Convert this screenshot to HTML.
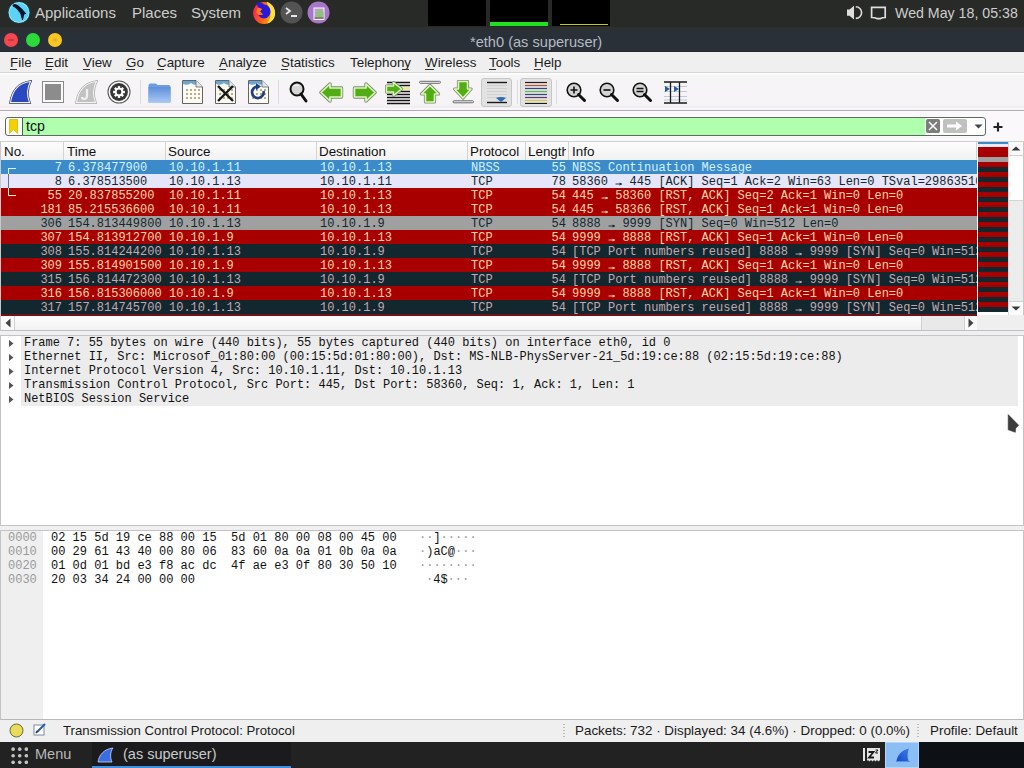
<!DOCTYPE html><html><head><meta charset="utf-8"><style>
*{margin:0;padding:0;box-sizing:border-box}
html,body{width:1024px;height:768px;overflow:hidden;background:#fff;font-family:"Liberation Sans",sans-serif}
.a{position:absolute}
.m{font-family:"Liberation Mono",monospace;font-size:12px;white-space:pre}
.t{white-space:pre}
#top{left:0;top:0;width:1024px;height:27px;background:#282a27;color:#cdcdcd;font-size:15px}
#title{left:0;top:27px;width:1024px;height:25px;background:linear-gradient(#2c2f2e 0,#2a3037 5px,#2a3038 23px,#1e2226 25px)}
#menu{left:0;top:52px;width:1024px;height:21px;background:#efefef;font-size:13.4px;color:#1c1c1c;border-bottom:1px solid #d6d6d6}
#menu u{text-decoration:none;border-bottom:1px solid #333}
#tool{left:0;top:73px;width:1024px;height:38px;background:linear-gradient(#fff 0,#fff 1px,#f6f5f6 2px,#f6f3f6 33px,#ece8ec 34px,#f8f6f8 35px,#f8f6f8 37px,#b4acb4 37px)}
#filt{left:0;top:111px;width:1024px;height:30px;background:#fbf8fb}
.hdr{top:142px;height:18px;background:linear-gradient(#fdfdfd,#f1f1f1);border-right:1px solid #d4d4d4;font-size:13.4px;color:#111;line-height:18px;overflow:hidden;white-space:nowrap}
.row{left:1px;width:976px;height:14px;line-height:14px;overflow:hidden}
.row div{position:absolute;top:1px;height:14px}
.r1{background:#3b8bcb;color:#d4f2ff}
.r2{background:#e6e6fa;color:#12272e}
.rd{background:#a80000;color:#ffd6aa}
.gy{background:#a0a0a0;color:#12272e}
.dk{background:#12272e;color:#c0aab2}
.ar{display:inline-block;width:7.2px;height:0;position:relative}.ar svg{position:absolute;left:0;top:-4.5px}
#status{left:0;top:720px;width:1024px;height:22px;background:#efefef;font-size:13.4px;color:#1a1a1a}
#task{left:0;top:742px;width:1024px;height:26px;background:#222222;color:#cacaca;font-size:14.5px}
</style></head><body>
<div id="top" class="a">
<svg class="a" style="left:7px;top:0px" width="25" height="25" viewBox="0 0 25 25"><circle cx="12" cy="12.5" r="11.3" fill="#17404c"/><circle cx="12" cy="12.5" r="10.5" fill="#9ae8fc"/><circle cx="12" cy="12.5" r="9.6" fill="#5cd3f6"/><path d="M6 5.5 C7 4.2 9 4.5 11 6 C13.5 8 16 10.5 18.5 13.5 L17.5 14 L16.5 13.5 C16.5 15.5 16 17.5 15.5 19.5 C15 17.5 14.5 15 13.5 13 C12 10.5 10.5 8.5 8.5 7.2 C7.5 6.8 6.5 6.5 6 5.5Z" fill="#06122a" stroke="#06122a" stroke-width="1.1" stroke-linejoin="round"/></svg>
<div class="a t" style="left:35px;top:4px;font-size:15px">Applications</div>
<div class="a t" style="left:132px;top:4px;font-size:15px">Places</div>
<div class="a t" style="left:191px;top:4px;font-size:15px">System</div>
<svg class="a" style="left:252px;top:1px" width="24" height="24" viewBox="0 0 24 24"><defs><linearGradient id="ffg" x1="0" y1="0.4" x2="1" y2="0.6"><stop offset="0" stop-color="#ff1f5e"/><stop offset="0.5" stop-color="#ff6a10"/><stop offset="1" stop-color="#ffc020"/></linearGradient></defs><circle cx="12" cy="12" r="11" fill="url(#ffg)"/><path d="M14.5 0.8 C20.5 2.5 23.5 8 23 13.5 C22.5 18.5 19 21.5 15 22.5 C18.5 18.5 19.5 13 17.5 8.5 C16.8 6 15.5 3 14.5 0.8Z" fill="#ffe23a"/><path d="M4.5 2 C7 1 10 1.5 12 3.5 C15.5 3.5 18.5 6.5 18.5 10.5 C18.5 14.5 15.5 17.5 12 17.5 C9.5 17.5 7.5 16 6.5 14 L11 13.5 L8 10.5 L10 8 L6 6.5 C5.5 5 5 3.5 4.5 2Z" fill="#2818d8"/><path d="M6 6.5 L10 8 L8 10.5 L11 13.5 L6.5 14 L4 11Z" fill="#ff7a1a"/></svg>
<svg class="a" style="left:280px;top:1px" width="23" height="23" viewBox="0 0 23 23"><circle cx="11.5" cy="11.5" r="11" fill="#535353"/><path d="M6 7 L10 10 L6 13" fill="none" stroke="#e8e8e8" stroke-width="1.8"/><rect x="11" y="14" width="6" height="2" fill="#e8e8e8"/></svg>
<svg class="a" style="left:307px;top:1px" width="23" height="23" viewBox="0 0 23 23"><circle cx="11.5" cy="11.5" r="11" fill="#a676c8"/><rect x="7" y="7" width="10" height="11.5" fill="#b8a8b8" stroke="#f6ecff" stroke-width="1.1"/><path d="M9 12 L12 9 L16.5 11 V17.5 H9Z" fill="#90c080"/><rect x="7.5" y="16.5" width="9" height="1" fill="#6a4a5a"/></svg>
<div class="a" style="left:428px;top:0;width:58px;height:26px;background:#000"></div>
<div class="a" style="left:490px;top:0;width:58px;height:26px;background:#000"><div class="a" style="left:0;top:22px;width:58px;height:4px;background:#1ee01e"></div></div>
<div class="a" style="left:552px;top:0;width:58px;height:26px;background:#000"><div class="a" style="left:8px;top:24px;width:48px;height:1px;background:#c8c820"></div></div>
<svg class="a" style="left:846px;top:5px" width="17" height="16" viewBox="0 0 17 16"><path d="M1 4.5 H3.5 L8 0.8 V14.4 L3.5 10.8 H1 Z" fill="#dedede"/><path d="M9.8 1.8 A5.8 5.8 0 0 1 9.8 13.4" fill="none" stroke="#dedede" stroke-width="1.6"/></svg>
<svg class="a" style="left:870px;top:6px" width="17" height="14" viewBox="0 0 17 14"><path d="M1.6 1.4 H15.2 V11.5 Q12 11.5 10.5 12.6 H7 Q5.5 11.5 1.6 11.5Z" fill="none" stroke="#dedede" stroke-width="1.7"/></svg>
<div class="a t" style="left:895px;top:5px;font-size:14.2px">Wed May 18, 05:38</div>
</div>
<div id="title" class="a">
<div class="a" style="left:4px;top:6px;width:14px;height:14px;border-radius:50%;background:#f4474f"><div class="a" style="left:4px;top:6px;width:6px;height:2px;background:#b83030;opacity:.6"></div></div>
<div class="a" style="left:26px;top:6px;width:14px;height:14px;border-radius:50%;background:#2bdb3a"></div>
<div class="a" style="left:48px;top:6px;width:14px;height:14px;border-radius:50%;background:#fac81c"><div class="a" style="left:5px;top:5px;width:4px;height:4px;border-radius:50%;background:#f09850;opacity:.7"></div></div>
<div class="a t" style="left:470px;top:7px;font-size:14.6px;color:#b4bbc3">*eth0 (as superuser)</div>
</div>
<div id="menu" class="a">
<div class="a t" style="left:10px;top:3px">File</div>
<div class="a" style="left:10px;top:17px;width:7px;height:1px;background:#333"></div>
<div class="a t" style="left:45px;top:3px">Edit</div>
<div class="a" style="left:45px;top:17px;width:7px;height:1px;background:#333"></div>
<div class="a t" style="left:83px;top:3px">View</div>
<div class="a" style="left:83px;top:17px;width:7px;height:1px;background:#333"></div>
<div class="a t" style="left:126px;top:3px">Go</div>
<div class="a" style="left:126px;top:17px;width:9px;height:1px;background:#333"></div>
<div class="a t" style="left:157px;top:3px">Capture</div>
<div class="a" style="left:157px;top:17px;width:7px;height:1px;background:#333"></div>
<div class="a t" style="left:219px;top:3px">Analyze</div>
<div class="a" style="left:219px;top:17px;width:7px;height:1px;background:#333"></div>
<div class="a t" style="left:281px;top:3px">Statistics</div>
<div class="a" style="left:281px;top:17px;width:7px;height:1px;background:#333"></div>
<div class="a t" style="left:350px;top:3px">Telephony</div>
<div class="a" style="left:402px;top:17px;width:7px;height:1px;background:#333"></div>
<div class="a t" style="left:425px;top:3px">Wireless</div>
<div class="a" style="left:425px;top:17px;width:9px;height:1px;background:#333"></div>
<div class="a t" style="left:489px;top:3px">Tools</div>
<div class="a" style="left:489px;top:17px;width:7px;height:1px;background:#333"></div>
<div class="a t" style="left:534px;top:3px">Help</div>
<div class="a" style="left:534px;top:17px;width:7px;height:1px;background:#333"></div>
</div>
<div id="tool" class="a">
<svg class="a" style="left:9px;top:7px" width="23" height="24" viewBox="0 0 23 24"><path d="M1.5 22.5 C3 12 9 3 21.5 1.5 C18 8 18 16 20.5 22.5Z" fill="none" stroke="#3a3a4a" stroke-width="2.4"/><path d="M1.5 22.5 C3 12 9 3 21.5 1.5 C18 8 18 16 20.5 22.5Z" fill="#2a48c0" stroke="#f2f2ff" stroke-width="1.1"/></svg>
<svg class="a" style="left:42px;top:8px" width="22" height="22" viewBox="0 0 22 22"><rect x="0.5" y="0.5" width="21" height="21" fill="#fafafa" stroke="#8a8a8a"/><rect x="3" y="3" width="16" height="16" fill="#8c8c8c"/></svg>
<svg class="a" style="left:75px;top:7px" width="23" height="24" viewBox="0 0 23 24"><path d="M1.5 22.5 C3 12 9 3 21.5 1.5 C18 8 18 16 20.5 22.5Z" fill="none" stroke="#a8a8a8" stroke-width="2.4"/><path d="M1.5 22.5 C3 12 9 3 21.5 1.5 C18 8 18 16 20.5 22.5Z" fill="#c2c2c2" stroke="#f4f4f4" stroke-width="1.1"/><path d="M12 9 V16 Q12 19 9 19 Q7 19 7 17" fill="none" stroke="#f0f0f0" stroke-width="2.2"/></svg>
<svg class="a" style="left:107px;top:7px" width="24" height="24" viewBox="0 0 24 24"><circle cx="12" cy="12" r="11" fill="#f7f7f7" stroke="#5a5a5a" stroke-width="1.1"/><circle cx="12" cy="12" r="8.9" fill="#363636"/><g transform="translate(12 12)" fill="#fff"><circle r="4.2"/><rect x="-1.2" y="-5.9" width="2.4" height="2.8" transform="rotate(0)"/><rect x="-1.2" y="-5.9" width="2.4" height="2.8" transform="rotate(45)"/><rect x="-1.2" y="-5.9" width="2.4" height="2.8" transform="rotate(90)"/><rect x="-1.2" y="-5.9" width="2.4" height="2.8" transform="rotate(135)"/><rect x="-1.2" y="-5.9" width="2.4" height="2.8" transform="rotate(180)"/><rect x="-1.2" y="-5.9" width="2.4" height="2.8" transform="rotate(225)"/><rect x="-1.2" y="-5.9" width="2.4" height="2.8" transform="rotate(270)"/><rect x="-1.2" y="-5.9" width="2.4" height="2.8" transform="rotate(315)"/></g><circle cx="12" cy="12" r="2.4" fill="#363636"/></svg>
<div class="a" style="left:140px;top:7px;width:1px;height:24px;background:#dcdcdc"></div>
<svg class="a" style="left:148px;top:10px" width="23" height="20" viewBox="0 0 23 20"><path d="M0.5 2.5 Q0.5 0.5 2.5 0.5 H8 L9.5 2 H20.5 Q22.5 2 22.5 4 V19.5 H0.5Z" fill="#6b9de0"/><rect x="0.5" y="4" width="22" height="15.5" fill="url(#fg)"/><defs><linearGradient id="fg" x1="0" y1="0" x2="0" y2="1"><stop offset="0" stop-color="#5f8fd8"/><stop offset="1" stop-color="#a9c9f5"/></linearGradient></defs></svg>
<svg class="a" style="left:182px;top:7px" width="21" height="24" viewBox="0 0 21 24"><path d="M0.5 0.5 H14 L20.5 7 V23.5 H0.5Z" fill="#fbfbf4" stroke="#646464" stroke-width="1"/><path d="M1 1 H13.5 L16 3.5 Q12 6 9 3 Q6 6 1 4Z" fill="#6ca7d3"/><path d="M14 0.5 V7 H20.5" fill="#e0e8f0" stroke="#646464" stroke-width="0.8"/><g fill="#b0a078" opacity=".85"><rect x="4" y="9" width="2" height="2"/><rect x="8" y="9" width="2" height="2"/><rect x="12" y="9" width="2" height="2"/><rect x="16" y="9" width="2" height="2"/><rect x="4" y="13" width="2" height="2"/><rect x="8" y="13" width="2" height="2"/><rect x="12" y="13" width="2" height="2"/><rect x="16" y="13" width="2" height="2"/><rect x="4" y="17" width="2" height="2"/><rect x="8" y="17" width="2" height="2"/><rect x="12" y="17" width="2" height="2"/><rect x="16" y="17" width="2" height="2"/></g></svg>
<svg class="a" style="left:215px;top:7px" width="21" height="24" viewBox="0 0 21 24"><path d="M0.5 0.5 H14 L20.5 7 V23.5 H0.5Z" fill="#fbfbf4" stroke="#646464" stroke-width="1"/><path d="M1 1 H13.5 L16 3.5 Q12 6 9 3 Q6 6 1 4Z" fill="#6ca7d3"/><path d="M14 0.5 V7 H20.5" fill="#e0e8f0" stroke="#646464" stroke-width="0.8"/><g fill="#b0a078" opacity=".85"><rect x="4" y="9" width="2" height="2"/><rect x="8" y="9" width="2" height="2"/><rect x="12" y="9" width="2" height="2"/><rect x="16" y="9" width="2" height="2"/><rect x="4" y="13" width="2" height="2"/><rect x="8" y="13" width="2" height="2"/><rect x="12" y="13" width="2" height="2"/><rect x="16" y="13" width="2" height="2"/><rect x="4" y="17" width="2" height="2"/><rect x="8" y="17" width="2" height="2"/><rect x="12" y="17" width="2" height="2"/><rect x="16" y="17" width="2" height="2"/></g><path d="M3 6 L18 21 M18 6 L3 21" stroke="#1a1a1a" stroke-width="2.4"/></svg>
<svg class="a" style="left:248px;top:7px" width="21" height="24" viewBox="0 0 21 24"><path d="M0.5 0.5 H14 L20.5 7 V23.5 H0.5Z" fill="#fbfbf4" stroke="#646464" stroke-width="1"/><path d="M1 1 H13.5 L16 3.5 Q12 6 9 3 Q6 6 1 4Z" fill="#6ca7d3"/><path d="M14 0.5 V7 H20.5" fill="#e0e8f0" stroke="#646464" stroke-width="0.8"/><g fill="#b0a078" opacity=".85"><rect x="4" y="9" width="2" height="2"/><rect x="8" y="9" width="2" height="2"/><rect x="12" y="9" width="2" height="2"/><rect x="16" y="9" width="2" height="2"/><rect x="4" y="13" width="2" height="2"/><rect x="8" y="13" width="2" height="2"/><rect x="12" y="13" width="2" height="2"/><rect x="16" y="13" width="2" height="2"/><rect x="4" y="17" width="2" height="2"/><rect x="8" y="17" width="2" height="2"/><rect x="12" y="17" width="2" height="2"/><rect x="16" y="17" width="2" height="2"/></g><path d="M15.5 11 A5.8 5.8 0 1 1 10 6.5" fill="none" stroke="#1f3f80" stroke-width="2.6"/><path d="M8 3 L13 6.5 L8 10Z" fill="#1f3f80"/></svg>
<div class="a" style="left:278px;top:7px;width:1px;height:24px;background:#dcdcdc"></div>
<svg class="a" style="left:289px;top:8px" width="19" height="23" viewBox="0 0 19 23"><circle cx="8" cy="8" r="6.5" fill="#d6d6d6" stroke="#111" stroke-width="2"/><path d="M12 13 L17 20" stroke="#111" stroke-width="3" stroke-linecap="round"/><path d="M5 5 Q7 3.5 9.5 4.5" fill="none" stroke="#fff" stroke-width="1"/></svg>
<svg class="a" style="left:319px;top:9px" width="25" height="21" viewBox="0 0 25 21"><path d="M2 10.5 L11 2 V6 H22.5 V15 H11 V19 Z" fill="none" stroke="#7d8a78" stroke-width="3.4" stroke-linejoin="round"/><path d="M2 10.5 L11 2 V6 H22.5 V15 H11 V19 Z" fill="#52ac16" stroke="#dcf7b8" stroke-width="1.7" stroke-linejoin="round"/></svg>
<svg class="a" style="left:352px;top:9px" width="25" height="21" viewBox="0 0 25 21"><path d="M23 10.5 L14 2 V6 H2.5 V15 H14 V19 Z" fill="none" stroke="#7d8a78" stroke-width="3.4" stroke-linejoin="round"/><path d="M23 10.5 L14 2 V6 H2.5 V15 H14 V19 Z" fill="#52ac16" stroke="#dcf7b8" stroke-width="1.7" stroke-linejoin="round"/></svg>
<svg class="a" style="left:385px;top:8px" width="26" height="24" viewBox="0 0 26 24"><g stroke="#161616" stroke-width="1.5"><path d="M2 1.5H25"/><path d="M2 4.5H25"/><path d="M2 10.5H25"/><path d="M2 13.5H25"/><path d="M2 16.5H25"/><path d="M2 19.5H25"/><path d="M2 22.5H25"/></g><path d="M15 7.5 H25" stroke="#efe590" stroke-width="2.4"/><path d="M1.5 5 H8.5 V1.5 L16.5 8 L8.5 14.5 V11 H1.5Z" fill="#52ac16" stroke="#7d8a78" stroke-width="3" stroke-linejoin="round"/><path d="M1.5 5 H8.5 V1.5 L16.5 8 L8.5 14.5 V11 H1.5Z" fill="#52ac16" stroke="#dcf7b8" stroke-width="1.5" stroke-linejoin="round"/></svg>
<svg class="a" style="left:418px;top:7px" width="25" height="24" viewBox="0 0 25 24"><rect x="1.5" y="1.3" width="21" height="2" rx="1" fill="#f4f4f4" stroke="#6a6a6a" stroke-width="1"/><path d="M12 5.5 L20.5 14 H16.5 V22 H7.5 V14 H3.5Z" fill="#52ac16" stroke="#7d8a78" stroke-width="3.2" stroke-linejoin="round"/><path d="M12 5.5 L20.5 14 H16.5 V22 H7.5 V14 H3.5Z" fill="#52ac16" stroke="#dcf7b8" stroke-width="1.6" stroke-linejoin="round"/></svg>
<svg class="a" style="left:451px;top:7px" width="25" height="24" viewBox="0 0 25 24"><rect x="2" y="20.8" width="20.5" height="2" rx="1" fill="#f4f4f4" stroke="#6a6a6a" stroke-width="1"/><path d="M12 18 L20 9 H16.5 V1.5 H7.5 V9 H3.5Z" fill="#52ac16" stroke="#7d8a78" stroke-width="3.2" stroke-linejoin="round"/><path d="M12 18 L20 9 H16.5 V1.5 H7.5 V9 H3.5Z" fill="#52ac16" stroke="#dcf7b8" stroke-width="1.6" stroke-linejoin="round"/></svg>
<div class="a" style="left:481px;top:5px;width:31px;height:29px;border:1px solid #c6c6c6;border-radius:3px;background:#e2e2e2"></div>
<svg class="a" style="left:485px;top:8px" width="24" height="23" viewBox="0 0 24 23"><g stroke="#cfcfcf" stroke-width="1"><path d="M2 4.5H22M2 7.5H22M2 10.5H22M2 13.5H22M2 16.5H22"/></g><path d="M2 1.5H22" stroke="#1a1a1a" stroke-width="1.4"/><path d="M2 21.5H22" stroke="#1a1a1a" stroke-width="1.4"/><path d="M11 17 Q16 15 21 17 L16 21Z" fill="#2f6cb0"/></svg>
<div class="a" style="left:517px;top:7px;width:1px;height:24px;background:#dcdcdc"></div>
<div class="a" style="left:520px;top:5px;width:32px;height:29px;border:1px solid #c6c6c6;border-radius:3px;background:#e2e2e2"></div>
<svg class="a" style="left:524px;top:8px" width="24" height="23" viewBox="0 0 24 23"><path d="M1 1.5H23" stroke="#2a1818" stroke-width="1.2"/><path d="M1 4.5H23" stroke="#b05040" stroke-width="1.2"/><path d="M1 7.5H23" stroke="#34487a" stroke-width="1.2"/><path d="M1 10.5H23" stroke="#60b850" stroke-width="1.2"/><path d="M1 13.5H23" stroke="#2a4a78" stroke-width="1.2"/><path d="M1 16.5H23" stroke="#5a3a70" stroke-width="1.2"/><path d="M1 19.5H23" stroke="#d8c850" stroke-width="1.2"/><path d="M1 22.5H23" stroke="#1a1a1a" stroke-width="1.2"/></svg>
<div class="a" style="left:556px;top:7px;width:1px;height:24px;background:#dcdcdc"></div>
<svg class="a" style="left:566px;top:9px" width="21" height="21" viewBox="0 0 21 21"><circle cx="8" cy="8" r="6.8" fill="#d4d4d4" stroke="#111" stroke-width="1.6"/><path d="M12.5 12.5 L18.5 18.5" stroke="#111" stroke-width="3" stroke-linecap="round"/><path d="M4.5 8H11.5M8 4.5V11.5" stroke="#111" stroke-width="1.6"/></svg>
<svg class="a" style="left:599px;top:9px" width="21" height="21" viewBox="0 0 21 21"><circle cx="8" cy="8" r="6.8" fill="#d4d4d4" stroke="#111" stroke-width="1.6"/><path d="M12.5 12.5 L18.5 18.5" stroke="#111" stroke-width="3" stroke-linecap="round"/><path d="M4.5 8H11.5" stroke="#111" stroke-width="1.6"/></svg>
<svg class="a" style="left:632px;top:9px" width="21" height="21" viewBox="0 0 21 21"><circle cx="8" cy="8" r="6.8" fill="#d4d4d4" stroke="#111" stroke-width="1.6"/><path d="M12.5 12.5 L18.5 18.5" stroke="#111" stroke-width="3" stroke-linecap="round"/><path d="M4.5 6.5H11.5M4.5 9.5H11.5" stroke="#111" stroke-width="1.5"/></svg>
<svg class="a" style="left:664px;top:8px" width="23" height="23" viewBox="0 0 23 23"><g stroke="#1a1a1a" stroke-width="1.6"><path d="M0 1H23M0 22H23"/></g><g stroke="#bfc8d8" stroke-width="1"><path d="M0 5.5H23M0 10.5H23M0 15.5H23M0 19H23"/></g><g stroke="#1a1a1a" stroke-width="1.3"><path d="M6.5 1V22M15.5 1V22"/></g><path d="M1 5 L6 8 L1 11Z M10 5 L15 8 L10 11Z" fill="#2a5aa8"/></svg>
</div>
<div id="filt" class="a">
<div class="a" style="left:5px;top:6px;width:981px;height:19px;border:1px solid #5f6a5f;border-radius:3px;background:#fff;overflow:hidden">
<div class="a" style="left:16px;top:0;width:903px;height:17px;background:#afffaf;border-left:1px solid #48604a"></div>
<svg class="a" style="left:3px;top:1px" width="9" height="15" viewBox="0 0 9 15"><path d="M0.5 0.5 H8.5 V14.5 L4.5 10.5 L0.5 14.5Z" fill="#f4d000" stroke="#d8b800" stroke-width="0.8"/></svg>
<div class="a t" style="left:20px;top:0;font-size:14.2px;line-height:17px;color:#111">tcp</div>
<svg class="a" style="left:920px;top:1px" width="14" height="14" viewBox="0 0 14 14"><rect x="0" y="0" width="14" height="14" rx="2" fill="#7c7c7c"/><path d="M3 3 L11 11 M11 3 L3 11" stroke="#fff" stroke-width="1.5"/></svg>
<svg class="a" style="left:937px;top:1px" width="24" height="14" viewBox="0 0 24 14"><rect x="0" y="0" width="24" height="14" rx="2" fill="#c0c0c0"/><path d="M4 5.5 H13 V2.5 L19 7 L13 11.5 V8.5 H4Z" fill="#fff"/></svg>
<svg class="a" style="left:968px;top:6px" width="9" height="5" viewBox="0 0 9 5"><path d="M0.5 0.5 H8.5 L4.5 4.5Z" fill="#444"/></svg>
</div>
<svg class="a" style="left:993px;top:11px" width="10" height="10" viewBox="0 0 10 10"><path d="M5 0.5V9.5M0.5 5H9.5" stroke="#222" stroke-width="2.2"/></svg>
</div>
<div class="a" style="left:0;top:141px;width:1024px;height:190px;background:#fff;border-top:1px solid #cfcfcf"></div>
<div class="a hdr" style="left:1px;width:63px"><div class="a t" style="left:3px;top:1px;width:400px;overflow:hidden">No.</div></div>
<div class="a hdr" style="left:64px;width:102px"><div class="a t" style="left:3px;top:1px;width:400px;overflow:hidden">Time</div></div>
<div class="a hdr" style="left:166px;width:151px"><div class="a t" style="left:2px;top:1px;width:400px;overflow:hidden">Source</div></div>
<div class="a hdr" style="left:317px;width:151px"><div class="a t" style="left:2px;top:1px;width:400px;overflow:hidden">Destination</div></div>
<div class="a hdr" style="left:468px;width:58px"><div class="a t" style="left:2px;top:1px;width:400px;overflow:hidden">Protocol</div></div>
<div class="a hdr" style="left:526px;width:43px"><div class="a t" style="left:2px;top:1px;width:38px;overflow:hidden">Length</div></div>
<div class="a hdr" style="left:569px;width:408px"><div class="a t" style="left:3px;top:1px;width:400px;overflow:hidden">Info</div></div>
<div class="a row m r1" style="top:160px">
<div style="left:0;width:61px;text-align:right">7</div>
<div style="left:67px">6.378477900</div>
<div style="left:168px">10.10.1.11</div>
<div style="left:319px">10.10.1.13</div>
<div style="left:470px">NBSS</div>
<div style="left:526px;width:39px;text-align:right">55</div>
<div style="left:571px">NBSS Continuation Message</div>
</div>
<div class="a row m r2" style="top:174px">
<div style="left:0;width:61px;text-align:right">8</div>
<div style="left:67px">6.378513500</div>
<div style="left:168px">10.10.1.13</div>
<div style="left:319px">10.10.1.11</div>
<div style="left:470px">TCP</div>
<div style="left:526px;width:39px;text-align:right">78</div>
<div style="left:571px">58360 <span class="ar"><svg width="8" height="6" viewBox="0 0 8 6"><path d="M0.5 3H6.8" stroke="currentColor" fill="none" stroke-width="0.9"/><path d="M4.6 1.4L7.2 3L4.6 4.6Z" fill="currentColor"/></svg></span> 445 [ACK] Seq=1 Ack=2 Win=63 Len=0 TSval=2986351086 TSecr=1</div>
</div>
<div class="a row m rd" style="top:188px">
<div style="left:0;width:61px;text-align:right">55</div>
<div style="left:67px">20.837855200</div>
<div style="left:168px">10.10.1.11</div>
<div style="left:319px">10.10.1.13</div>
<div style="left:470px">TCP</div>
<div style="left:526px;width:39px;text-align:right">54</div>
<div style="left:571px">445 <span class="ar"><svg width="8" height="6" viewBox="0 0 8 6"><path d="M0.5 3H6.8" stroke="currentColor" fill="none" stroke-width="0.9"/><path d="M4.6 1.4L7.2 3L4.6 4.6Z" fill="currentColor"/></svg></span> 58360 [RST, ACK] Seq=2 Ack=1 Win=0 Len=0</div>
</div>
<div class="a row m rd" style="top:202px">
<div style="left:0;width:61px;text-align:right">181</div>
<div style="left:67px">85.215536600</div>
<div style="left:168px">10.10.1.11</div>
<div style="left:319px">10.10.1.13</div>
<div style="left:470px">TCP</div>
<div style="left:526px;width:39px;text-align:right">54</div>
<div style="left:571px">445 <span class="ar"><svg width="8" height="6" viewBox="0 0 8 6"><path d="M0.5 3H6.8" stroke="currentColor" fill="none" stroke-width="0.9"/><path d="M4.6 1.4L7.2 3L4.6 4.6Z" fill="currentColor"/></svg></span> 58366 [RST, ACK] Seq=1 Ack=1 Win=0 Len=0</div>
</div>
<div class="a row m gy" style="top:216px">
<div style="left:0;width:61px;text-align:right">306</div>
<div style="left:67px">154.813449800</div>
<div style="left:168px">10.10.1.13</div>
<div style="left:319px">10.10.1.9</div>
<div style="left:470px">TCP</div>
<div style="left:526px;width:39px;text-align:right">54</div>
<div style="left:571px">8888 <span class="ar"><svg width="8" height="6" viewBox="0 0 8 6"><path d="M0.5 3H6.8" stroke="currentColor" fill="none" stroke-width="0.9"/><path d="M4.6 1.4L7.2 3L4.6 4.6Z" fill="currentColor"/></svg></span> 9999 [SYN] Seq=0 Win=512 Len=0</div>
</div>
<div class="a row m rd" style="top:230px">
<div style="left:0;width:61px;text-align:right">307</div>
<div style="left:67px">154.813912700</div>
<div style="left:168px">10.10.1.9</div>
<div style="left:319px">10.10.1.13</div>
<div style="left:470px">TCP</div>
<div style="left:526px;width:39px;text-align:right">54</div>
<div style="left:571px">9999 <span class="ar"><svg width="8" height="6" viewBox="0 0 8 6"><path d="M0.5 3H6.8" stroke="currentColor" fill="none" stroke-width="0.9"/><path d="M4.6 1.4L7.2 3L4.6 4.6Z" fill="currentColor"/></svg></span> 8888 [RST, ACK] Seq=1 Ack=1 Win=0 Len=0</div>
</div>
<div class="a row m dk" style="top:244px">
<div style="left:0;width:61px;text-align:right">308</div>
<div style="left:67px">155.814244200</div>
<div style="left:168px">10.10.1.13</div>
<div style="left:319px">10.10.1.9</div>
<div style="left:470px">TCP</div>
<div style="left:526px;width:39px;text-align:right">54</div>
<div style="left:571px">[TCP Port numbers reused] 8888 <span class="ar"><svg width="8" height="6" viewBox="0 0 8 6"><path d="M0.5 3H6.8" stroke="currentColor" fill="none" stroke-width="0.9"/><path d="M4.6 1.4L7.2 3L4.6 4.6Z" fill="currentColor"/></svg></span> 9999 [SYN] Seq=0 Win=512 Len=0</div>
</div>
<div class="a row m rd" style="top:258px">
<div style="left:0;width:61px;text-align:right">309</div>
<div style="left:67px">155.814901500</div>
<div style="left:168px">10.10.1.9</div>
<div style="left:319px">10.10.1.13</div>
<div style="left:470px">TCP</div>
<div style="left:526px;width:39px;text-align:right">54</div>
<div style="left:571px">9999 <span class="ar"><svg width="8" height="6" viewBox="0 0 8 6"><path d="M0.5 3H6.8" stroke="currentColor" fill="none" stroke-width="0.9"/><path d="M4.6 1.4L7.2 3L4.6 4.6Z" fill="currentColor"/></svg></span> 8888 [RST, ACK] Seq=1 Ack=1 Win=0 Len=0</div>
</div>
<div class="a row m dk" style="top:272px">
<div style="left:0;width:61px;text-align:right">315</div>
<div style="left:67px">156.814472300</div>
<div style="left:168px">10.10.1.13</div>
<div style="left:319px">10.10.1.9</div>
<div style="left:470px">TCP</div>
<div style="left:526px;width:39px;text-align:right">54</div>
<div style="left:571px">[TCP Port numbers reused] 8888 <span class="ar"><svg width="8" height="6" viewBox="0 0 8 6"><path d="M0.5 3H6.8" stroke="currentColor" fill="none" stroke-width="0.9"/><path d="M4.6 1.4L7.2 3L4.6 4.6Z" fill="currentColor"/></svg></span> 9999 [SYN] Seq=0 Win=512 Len=0</div>
</div>
<div class="a row m rd" style="top:286px">
<div style="left:0;width:61px;text-align:right">316</div>
<div style="left:67px">156.815306000</div>
<div style="left:168px">10.10.1.9</div>
<div style="left:319px">10.10.1.13</div>
<div style="left:470px">TCP</div>
<div style="left:526px;width:39px;text-align:right">54</div>
<div style="left:571px">9999 <span class="ar"><svg width="8" height="6" viewBox="0 0 8 6"><path d="M0.5 3H6.8" stroke="currentColor" fill="none" stroke-width="0.9"/><path d="M4.6 1.4L7.2 3L4.6 4.6Z" fill="currentColor"/></svg></span> 8888 [RST, ACK] Seq=1 Ack=1 Win=0 Len=0</div>
</div>
<div class="a row m dk" style="top:300px">
<div style="left:0;width:61px;text-align:right">317</div>
<div style="left:67px">157.814745700</div>
<div style="left:168px">10.10.1.13</div>
<div style="left:319px">10.10.1.9</div>
<div style="left:470px">TCP</div>
<div style="left:526px;width:39px;text-align:right">54</div>
<div style="left:571px">[TCP Port numbers reused] 8888 <span class="ar"><svg width="8" height="6" viewBox="0 0 8 6"><path d="M0.5 3H6.8" stroke="currentColor" fill="none" stroke-width="0.9"/><path d="M4.6 1.4L7.2 3L4.6 4.6Z" fill="currentColor"/></svg></span> 9999 [SYN] Seq=0 Win=512 Len=0</div>
</div>
<div class="a" style="left:1px;top:314px;width:976px;height:2px;background:#72101a"></div>
<div class="a" style="left:8px;top:168px;width:8px;height:1px;background:#e0f4ff"></div>
<div class="a" style="left:8px;top:168px;width:1px;height:6px;background:#e0f4ff"></div>
<div class="a" style="left:8px;top:174px;width:1px;height:14px;background:#6a7080"></div>
<div class="a" style="left:8px;top:188px;width:1px;height:8px;background:#ffe8c0"></div>
<div class="a" style="left:8px;top:195px;width:8px;height:1px;background:#ffe8c0"></div>
<div class="a" style="left:978px;top:142px;width:30px;height:173px;background:#fff;overflow:hidden"><div class="a" style="left:0;top:0;width:30px;height:2px;background:#3b8bcb"></div><div class="a" style="left:0;top:2px;width:30px;height:3px;background:#ece8f4"></div><div class="a" style="left:0;top:5px;width:30px;height:10px;background:#a80000"></div><div class="a" style="left:0;top:15px;width:30px;height:5px;background:#a0a0a0"></div><div class="a" style="left:0;top:20px;width:30px;height:5px;background:#a80000"></div><div class="a" style="left:0;top:25px;width:30px;height:5px;background:#12272e"></div><div class="a" style="left:0;top:30px;width:30px;height:5px;background:#a80000"></div><div class="a" style="left:0;top:35px;width:30px;height:5px;background:#12272e"></div><div class="a" style="left:0;top:40px;width:30px;height:5px;background:#a80000"></div><div class="a" style="left:0;top:45px;width:30px;height:5px;background:#12272e"></div><div class="a" style="left:0;top:50px;width:30px;height:5px;background:#a80000"></div><div class="a" style="left:0;top:55px;width:30px;height:5px;background:#12272e"></div><div class="a" style="left:0;top:60px;width:30px;height:5px;background:#a80000"></div><div class="a" style="left:0;top:65px;width:30px;height:5px;background:#12272e"></div><div class="a" style="left:0;top:70px;width:30px;height:5px;background:#a80000"></div><div class="a" style="left:0;top:75px;width:30px;height:5px;background:#12272e"></div><div class="a" style="left:0;top:80px;width:30px;height:5px;background:#a80000"></div><div class="a" style="left:0;top:85px;width:30px;height:5px;background:#12272e"></div><div class="a" style="left:0;top:90px;width:30px;height:5px;background:#a80000"></div><div class="a" style="left:0;top:95px;width:30px;height:5px;background:#12272e"></div><div class="a" style="left:0;top:100px;width:30px;height:5px;background:#a80000"></div><div class="a" style="left:0;top:105px;width:30px;height:5px;background:#12272e"></div><div class="a" style="left:0;top:110px;width:30px;height:5px;background:#a80000"></div><div class="a" style="left:0;top:115px;width:30px;height:5px;background:#12272e"></div><div class="a" style="left:0;top:120px;width:30px;height:5px;background:#a80000"></div><div class="a" style="left:0;top:125px;width:30px;height:5px;background:#12272e"></div><div class="a" style="left:0;top:130px;width:30px;height:5px;background:#a80000"></div><div class="a" style="left:0;top:135px;width:30px;height:5px;background:#12272e"></div><div class="a" style="left:0;top:140px;width:30px;height:5px;background:#a80000"></div><div class="a" style="left:0;top:145px;width:30px;height:5px;background:#12272e"></div><div class="a" style="left:0;top:150px;width:30px;height:5px;background:#a80000"></div><div class="a" style="left:0;top:155px;width:30px;height:5px;background:#12272e"></div><div class="a" style="left:0;top:160px;width:30px;height:5px;background:#a80000"></div><div class="a" style="left:0;top:165px;width:30px;height:5px;background:#12272e"></div></div>
<div class="a" style="left:1008px;top:142px;width:16px;height:173px;background:#ececec;border-left:1px solid #d8d8d8;border-right:1px solid #c8c8c8"></div>
<div class="a" style="left:1009px;top:142px;width:14px;height:14px;background:#fbfbfb;border-bottom:1px solid #cfcfcf"></div>
<svg class="a" style="left:1011px;top:146px" width="10" height="5" viewBox="0 0 10 5"><path d="M0.5 4.5 L5 0.5 L9.5 4.5Z" fill="#3a3a3a"/></svg>
<div class="a" style="left:1009px;top:156px;width:14px;height:45px;background:#fdfdfd;border-bottom:1px solid #d4d4d4"></div>
<div class="a" style="left:1009px;top:301px;width:14px;height:14px;background:#fbfbfb;border-top:1px solid #cfcfcf"></div>
<svg class="a" style="left:1011px;top:306px" width="10" height="5" viewBox="0 0 10 5"><path d="M0.5 0.5 L5 4.5 L9.5 0.5Z" fill="#3a3a3a"/></svg>
<div class="a" style="left:1px;top:316px;width:976px;height:15px;background:#e9e9e9;border-bottom:1px solid #c0c0c0"></div>
<div class="a" style="left:1px;top:316px;width:14px;height:14px;background:#fafafa;border-right:1px solid #d0d0d0"></div>
<svg class="a" style="left:5px;top:318px" width="6" height="10" viewBox="0 0 6 10"><path d="M5.5 0.5 L0.5 5 L5.5 9.5Z" fill="#444"/></svg>
<div class="a" style="left:15px;top:316px;width:907px;height:14px;background:linear-gradient(#fdfdfd,#f2f2f2);border-right:1px solid #d0d0d0"></div>
<div class="a" style="left:964px;top:316px;width:13px;height:14px;background:#fafafa;border-left:1px solid #d0d0d0"></div>
<svg class="a" style="left:968px;top:318px" width="6" height="10" viewBox="0 0 6 10"><path d="M0.5 0.5 L5.5 5 L0.5 9.5Z" fill="#444"/></svg>
<div class="a" style="left:977px;top:315px;width:47px;height:16px;background:#efefef;border-bottom:1px solid #c0c0c0"></div>
<div class="a" style="left:0;top:141px;width:1px;height:190px;background:#c8c8c8"></div>
<div class="a" style="left:0;top:331px;width:1024px;height:4px;background:#f0eff1"></div>
<div class="a" style="left:0;top:335px;width:1024px;height:191px;background:#fff;border:1px solid #c4c4c4"></div>
<div class="a" style="left:21px;top:336px;width:997px;height:70px;background:#ececec"></div>
<div class="a m" style="left:24px;top:336px;line-height:14px;color:#111;font-size:11.97px">Frame 7: 55 bytes on wire (440 bits), 55 bytes captured (440 bits) on interface eth0, id 0</div>
<svg class="a" style="left:9px;top:340px" width="5" height="7" viewBox="0 0 5 7"><path d="M0 0 L4.5 3.5 L0 7Z" fill="#555"/></svg>
<div class="a m" style="left:24px;top:350px;line-height:14px;color:#111;font-size:11.97px">Ethernet II, Src: Microsof_01:80:00 (00:15:5d:01:80:00), Dst: MS-NLB-PhysServer-21_5d:19:ce:88 (02:15:5d:19:ce:88)</div>
<svg class="a" style="left:9px;top:354px" width="5" height="7" viewBox="0 0 5 7"><path d="M0 0 L4.5 3.5 L0 7Z" fill="#555"/></svg>
<div class="a m" style="left:24px;top:364px;line-height:14px;color:#111;font-size:11.97px">Internet Protocol Version 4, Src: 10.10.1.11, Dst: 10.10.1.13</div>
<svg class="a" style="left:9px;top:368px" width="5" height="7" viewBox="0 0 5 7"><path d="M0 0 L4.5 3.5 L0 7Z" fill="#555"/></svg>
<div class="a m" style="left:24px;top:378px;line-height:14px;color:#111;font-size:11.97px">Transmission Control Protocol, Src Port: 445, Dst Port: 58360, Seq: 1, Ack: 1, Len: 1</div>
<svg class="a" style="left:9px;top:382px" width="5" height="7" viewBox="0 0 5 7"><path d="M0 0 L4.5 3.5 L0 7Z" fill="#555"/></svg>
<div class="a m" style="left:24px;top:392px;line-height:14px;color:#111;font-size:11.97px">NetBIOS Session Service</div>
<svg class="a" style="left:9px;top:396px" width="5" height="7" viewBox="0 0 5 7"><path d="M0 0 L4.5 3.5 L0 7Z" fill="#555"/></svg>
<svg class="a" style="left:1007px;top:413px" width="13" height="20" viewBox="0 0 13 20"><path d="M1.2 1.6 L11.7 12.3 L8.7 15.2 L8.3 19.3 L1.2 16.8Z" fill="#3c3c3c" stroke="#3c3c3c" stroke-width="0.6" stroke-linejoin="round"/></svg>
<div class="a" style="left:0;top:526px;width:1024px;height:4px;background:#f0eff1"></div>
<div class="a" style="left:0;top:530px;width:1024px;height:190px;background:#fff;border:1px solid #c4c4c4;border-bottom-color:#b8b8b8"></div>
<div class="a" style="left:1px;top:531px;width:42px;height:188px;background:#efefef"></div>
<div class="a m" style="left:8px;top:531px;line-height:14px;color:#9a9a9a">0000</div>
<div class="a m" style="left:51px;top:531px;line-height:14px;color:#111">02 15 5d 19 ce 88 00 15  5d 01 80 00 08 00 45 00</div>
<div class="a m" style="left:419px;top:531px;line-height:14px;color:#111"><span style="color:#9a9a9a">·</span><span style="color:#9a9a9a">·</span>]<span style="color:#9a9a9a">·</span><span style="color:#9a9a9a">·</span><span style="color:#9a9a9a">·</span><span style="color:#9a9a9a">·</span><span style="color:#9a9a9a">·</span></div>
<div class="a m" style="left:8px;top:545px;line-height:14px;color:#9a9a9a">0010</div>
<div class="a m" style="left:51px;top:545px;line-height:14px;color:#111">00 29 61 43 40 00 80 06  83 60 0a 0a 01 0b 0a 0a</div>
<div class="a m" style="left:419px;top:545px;line-height:14px;color:#111"><span style="color:#9a9a9a">·</span>)aC@<span style="color:#9a9a9a">·</span><span style="color:#9a9a9a">·</span><span style="color:#9a9a9a">·</span></div>
<div class="a m" style="left:8px;top:559px;line-height:14px;color:#9a9a9a">0020</div>
<div class="a m" style="left:51px;top:559px;line-height:14px;color:#111">01 0d 01 bd e3 f8 ac dc  4f ae e3 0f 80 30 50 10</div>
<div class="a m" style="left:419px;top:559px;line-height:14px;color:#111"><span style="color:#9a9a9a">·</span><span style="color:#9a9a9a">·</span><span style="color:#9a9a9a">·</span><span style="color:#9a9a9a">·</span><span style="color:#9a9a9a">·</span><span style="color:#9a9a9a">·</span><span style="color:#9a9a9a">·</span><span style="color:#9a9a9a">·</span></div>
<div class="a m" style="left:8px;top:573px;line-height:14px;color:#9a9a9a">0030</div>
<div class="a m" style="left:51px;top:573px;line-height:14px;color:#111">20 03 34 24 00 00 00</div>
<div class="a m" style="left:426px;top:573px;line-height:14px;color:#111"><span style="color:#9a9a9a">·</span>4$<span style="color:#9a9a9a">·</span><span style="color:#9a9a9a">·</span><span style="color:#9a9a9a">·</span></div>
<div id="status" class="a">
<svg class="a" style="left:9px;top:3px" width="15" height="15" viewBox="0 0 15 15"><circle cx="7.5" cy="7.5" r="6.5" fill="#e8dc5a" stroke="#6a6a40" stroke-width="1"/></svg>
<svg class="a" style="left:33px;top:2px" width="14" height="14" viewBox="0 0 14 14"><rect x="1" y="3" width="10" height="10" fill="#fff" stroke="#7a8aa0"/><path d="M4 10 L12 2" stroke="#2a5aa8" stroke-width="2"/><path d="M3 11 L4.5 9" stroke="#333" stroke-width="1.5"/></svg>
<div class="a t" style="left:63px;top:3px;font-size:13.2px">Transmission Control Protocol: Protocol</div>
<div class="a" style="left:563px;top:4px;width:2px;height:14px;background:repeating-linear-gradient(#bbb 0,#bbb 1px,transparent 1px,transparent 3px)"></div>
<div class="a t" style="left:575px;top:3px">Packets: 732 · Displayed: 34 (4.6%) · Dropped: 0 (0.0%)</div>
<div class="a" style="left:917px;top:4px;width:2px;height:14px;background:repeating-linear-gradient(#bbb 0,#bbb 1px,transparent 1px,transparent 3px)"></div>
<div class="a t" style="left:930px;top:3px">Profile: Default</div>
</div>
<div id="task" class="a">
<svg class="a" style="left:11px;top:5px" width="17" height="17" viewBox="0 0 16 16"><circle cx="2.0" cy="2.0" r="1.7" fill="#c4c4c4"/><circle cx="8.2" cy="2.0" r="1.7" fill="#c4c4c4"/><circle cx="14.4" cy="2.0" r="1.7" fill="#c4c4c4"/><circle cx="2.0" cy="8.2" r="1.7" fill="#c4c4c4"/><circle cx="8.2" cy="8.2" r="1.7" fill="#c4c4c4"/><circle cx="14.4" cy="8.2" r="1.7" fill="#c4c4c4"/><circle cx="2.0" cy="14.4" r="1.7" fill="#c4c4c4"/><circle cx="8.2" cy="14.4" r="1.7" fill="#c4c4c4"/><circle cx="14.4" cy="14.4" r="1.7" fill="#c4c4c4"/></svg>
<div class="a t" style="left:35px;top:4px;color:#b8b8b8">Menu</div>
<div class="a" style="left:92px;top:0;width:199px;height:26px;background:#1b1b1d"></div>
<div class="a" style="left:92px;top:24px;width:199px;height:2px;background:#3d8fe0"></div>
<svg class="a" style="left:97px;top:5px" width="17" height="16" viewBox="0 0 17 16"><path d="M1 15 C2 8 7 2 16 1 C13 5 13 11 15 15Z" fill="#3a6ee0" stroke="#c8d8ff" stroke-width="0.8"/></svg>
<div class="a t" style="left:123px;top:4px">(as superuser)</div>
<svg class="a" style="left:862px;top:5px" width="19" height="16" viewBox="0 0 19 16"><rect x="1" y="1" width="2" height="13" fill="#e6e6e6"/><path d="M5 1 H18 V13 L16.5 14.5 L15 13 L13.5 14.5 L12 13 L10.5 14.5 L9 13 L7.5 14.5 L6 13 L5 14Z" fill="#e6e6e6"/><path d="M6.5 5 H11.5 L7 10.5 H12" stroke="#1a1a1a" stroke-width="1.8" fill="none"/><path d="M13.5 3 H16 L13.5 6 H16" stroke="#1a1a1a" stroke-width="1" fill="none"/></svg>
<div class="a" style="left:885px;top:0;width:34px;height:26px;background:#8cbef6;border:1px solid #b4d6fc"></div>
<svg class="a" style="left:895px;top:5px" width="16" height="16" viewBox="0 0 16 16"><defs><linearGradient id="tfg" x1="0" y1="1" x2="1" y2="0"><stop offset="0" stop-color="#1848c8"/><stop offset="1" stop-color="#3a7ef0"/></linearGradient></defs><path d="M1.5 14 C2.5 8 7 3 14 1.5 C12.5 5 12 10 13.5 14Z" fill="url(#tfg)"/><rect x="1" y="14" width="14" height="1" fill="#5a90e0"/></svg>
<div class="a" style="left:919px;top:0;width:105px;height:26px;background:#0d1014"></div>
</div>
</body></html>
